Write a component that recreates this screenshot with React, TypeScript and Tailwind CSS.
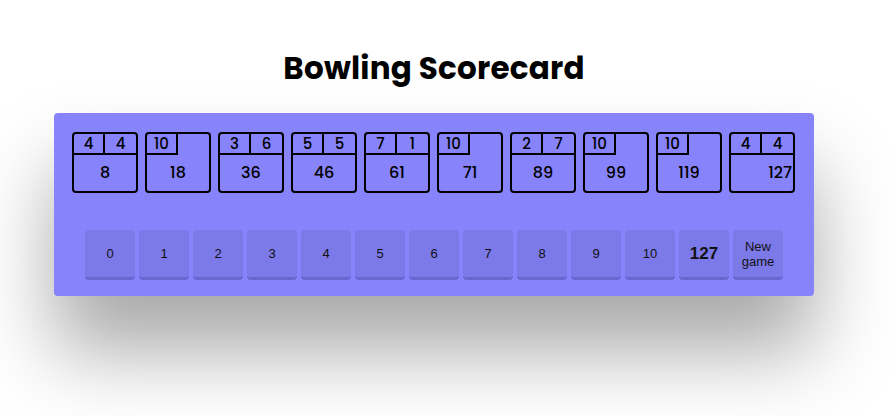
type Frame = { rolls: string[]; total: string; strike?: boolean };

const frames: Frame[] = [
  { rolls: ["4", "4"], total: "8" },
  { rolls: ["10"], total: "18", strike: true },
  { rolls: ["3", "6"], total: "36" },
  { rolls: ["5", "5"], total: "46" },
  { rolls: ["7", "1"], total: "61" },
  { rolls: ["10"], total: "71", strike: true },
  { rolls: ["2", "7"], total: "89" },
  { rolls: ["10"], total: "99", strike: true },
  { rolls: ["10"], total: "119", strike: true },
  { rolls: ["4", "4"], total: "127" },
];

const pins = ["0", "1", "2", "3", "4", "5", "6", "7", "8", "9", "10"];

const FrameBox = ({ frame, last }: { frame: Frame; last?: boolean }) => (
  <div className="w-[66px] h-[61px] border-2 border-black rounded-[4px] flex flex-col overflow-hidden">
    <div className="flex h-[21px] text-[15px] font-medium leading-none">
      <div className="w-[31px] border-r-2 border-b-2 border-black flex items-center justify-center">
        {frame.rolls[0]}
      </div>
      {!frame.strike && (
        <div className="flex-1 border-b-2 border-black flex items-center justify-center">
          {frame.rolls[1]}
        </div>
      )}
    </div>
    <div
      className={`flex-1 flex items-center text-[16px] font-medium ${
        last ? "justify-end pr-[1px]" : "justify-center"
      }`}
    >
      {frame.total}
    </div>
  </div>
);

export default function App() {
  return (
    <div
      className="min-h-screen bg-white flex flex-col items-center pt-[48px] pr-[28px] text-black"
      style={{ fontFamily: "Poppins, Inter, 'Noto Sans', sans-serif" }}
    >
      <h1 className="text-[31px] leading-[40px] font-bold mb-[25px] tracking-[0.2px]">
        Bowling Scorecard
      </h1>

      <div className="w-[760px] bg-[#8783fb] rounded-[4px] px-[18px] pt-[19px] pb-[16px] shadow-[0_55px_80px_rgba(0,0,0,0.34)]">
        {/* Frames */}
        <div className="flex gap-[7px]">
          {frames.map((f, i) => (
            <FrameBox key={i} frame={f} last={i === frames.length - 1} />
          ))}
        </div>

        {/* Pin buttons */}
        <div
          className="mt-[37px] flex justify-center gap-[4px]"
          style={{ fontFamily: "'Liberation Sans', Arial, sans-serif" }}
        >
          {pins.map((p) => (
            <button
              key={p}
              className="w-[50px] h-[50px] rounded-[4px] bg-[#7c79e9] border-b-[3px] border-[#6a66cf] text-[13px] text-[#111]"
            >
              {p}
            </button>
          ))}
          <button className="w-[50px] h-[50px] rounded-[4px] bg-[#7c79e9] border-b-[3px] border-[#6a66cf] text-[17px] font-semibold text-[#111]">
            127
          </button>
          <button className="w-[50px] h-[50px] rounded-[4px] bg-[#7c79e9] border-b-[3px] border-[#6a66cf] text-[13px] leading-[15px] text-[#111]">
            New
            <br />
            game
          </button>
        </div>
      </div>
    </div>
  );
}
